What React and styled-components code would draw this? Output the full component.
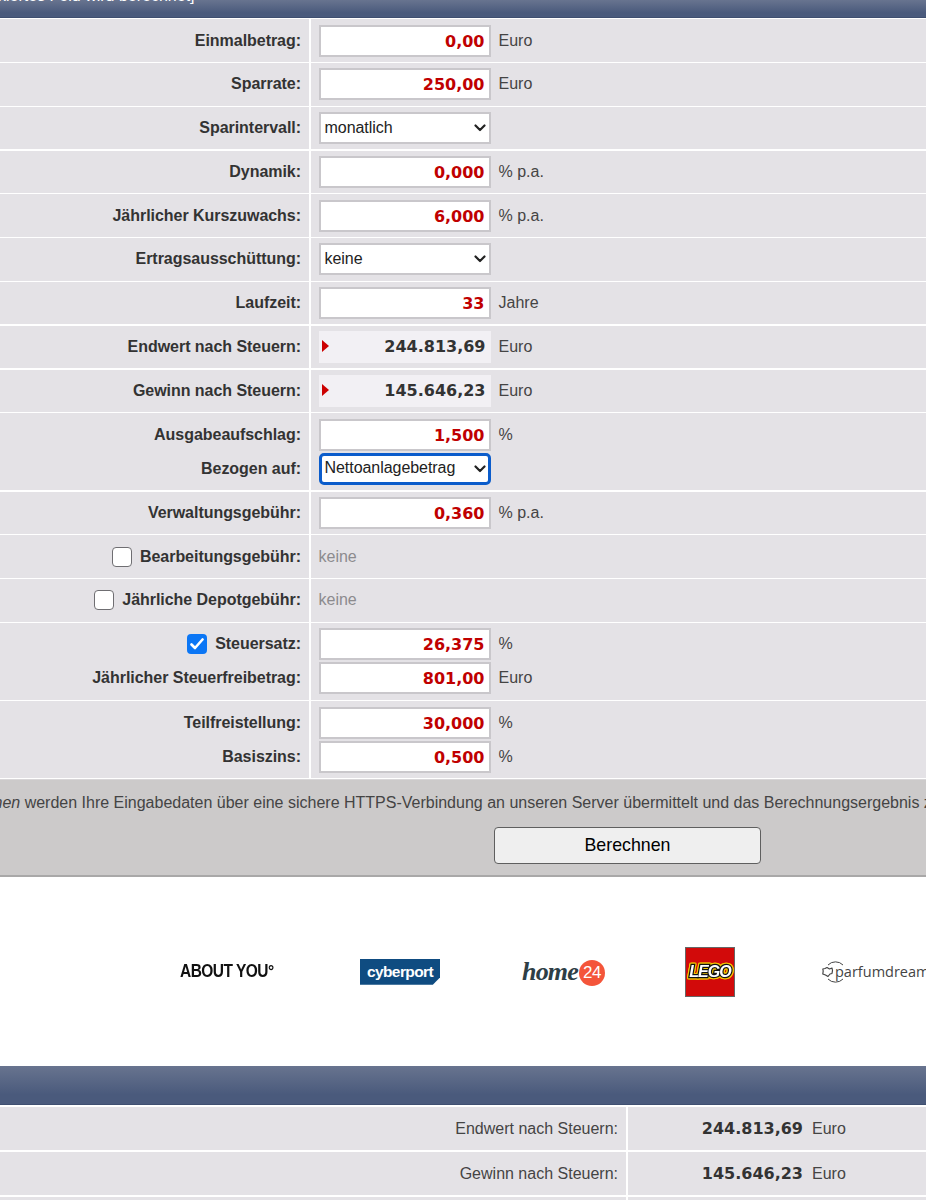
import styled, { createGlobalStyle } from 'styled-components'

const GlobalStyle = createGlobalStyle`
	html, body {
		margin: 0;
		padding: 0;
		background: white;
		font-family: "Liberation Sans", Arial, sans-serif;
		font-size: 16px;
		color: #333;
	}
`

const Page = styled.div`
	width: 926px;
	height: 1200px;
	overflow: hidden;
`

const Bar = styled.div`
	height: ${(props) => props.$height}px;
	overflow: hidden;
	white-space: nowrap;
	color: white;
	font-size: 16px;
	line-height: 18px;
	background: linear-gradient(#68748f, #4a5a7c 75%);
	border-bottom: 1px solid #3f4f70;
`

const BarText = styled.div`
	margin: -13px 0 0 -34px;
`

const Form = styled.div`
	display: flex;
	flex-direction: column;
	gap: 1.4px;
	padding: 1.4px 0;
`

const Row = styled.div`
	display: grid;
	grid-template-columns: 309px 1fr;
	column-gap: 1.5px;
	min-height: ${(props) => (props.$double ? '77px' : '0')};
`

const LabelCell = styled.div`
	display: flex;
	flex-direction: column;
	justify-content: center;
	gap: 2px;
	padding: 5.2px 8px 5.2px 0;
	background: #e4e2e6;
`

const ValueCell = styled(LabelCell)`
	padding: 5.2px 0 5.2px 8px;
`

const Line = styled.div`
	height: 32px;
	display: flex;
	align-items: center;
	justify-content: ${(props) => (props.$end ? 'flex-end' : 'flex-start')};
	gap: 8px;
`

const Label = styled.label`
	font-weight: bold;
	letter-spacing: -0.04px;
	color: #333;
`

const NumberInput = styled.input`
	box-sizing: border-box;
	width: 172px;
	height: 32px;
	padding: 1px 4px 0 0;
	border: 2px solid #c9c7cb;
	background: white;
	text-align: right;
	font-family: "DejaVu Sans", Verdana, sans-serif;
	font-size: 16px;
	font-weight: bold;
	color: #c00000;
	outline: none;
`

const Output = styled.div`
	box-sizing: border-box;
	width: 172px;
	height: 32px;
	padding: 0 5px 0 3px;
	display: flex;
	align-items: center;
	justify-content: space-between;
	background: #f2f0f4;
	font-family: "DejaVu Sans", Verdana, sans-serif;
	font-weight: bold;
	color: #333;
`

const Marker = styled.span`
	width: 0;
	height: 0;
	margin-top: -2px;
	border-top: 6.5px solid transparent;
	border-bottom: 6.5px solid transparent;
	border-left: 7px solid #cc0000;
`

const SelectWrap = styled.div`
	position: relative;
	width: 172px;
	height: 32px;
`

const Select = styled.select`
	box-sizing: border-box;
	width: 100%;
	height: 100%;
	padding: 0 0 2px ${(props) => (props.$focused ? 3 : 4)}px;
	appearance: none;
	border: ${(props) => (props.$focused ? '3px solid #0b5ccb' : '2px solid #c9c7cb')};
	border-radius: ${(props) => (props.$focused ? '5px' : '0')};
	background: white;
	font-family: "Liberation Sans", Arial, sans-serif;
	font-size: 16px;
	letter-spacing: -0.05px;
	color: #222;
	outline: none;
`

const Chevron = styled.svg`
	position: absolute;
	top: 12px;
	right: 5px;
	width: 12px;
	height: 8px;
	pointer-events: none;
`

const Unit = styled.span`
	color: #444;
`

const Muted = styled.span`
	color: #8c8b8e;
`

const Check = styled.span`
	box-sizing: border-box;
	width: 20px;
	height: 20px;
	display: flex;
	align-items: center;
	justify-content: center;
	border-radius: 4px;
	border: ${(props) => (props.$on ? 'none' : '1.5px solid #6f6e72')};
	background: ${(props) => (props.$on ? '#0b76f5' : 'white')};
`

const ActionBar = styled.div`
	margin-top: -0.4px;
	height: 95px;
	background: #cccaca;
	border-top: 1px solid #d8d6d8;
	border-bottom: 2px solid #a9a8a8;
	overflow: hidden;
`

const Notice = styled.div`
	margin: 13.7px 0 0 -163px;
	white-space: nowrap;
	line-height: 18px;
	color: #444;
`

const ButtonRow = styled.div`
	margin: 15px 0 0 494px;
`

const Button = styled.button`
	box-sizing: border-box;
	width: 267px;
	height: 37px;
	border: 1px solid #5f5f5f;
	border-radius: 4px;
	background: #efefef;
	font-family: "Liberation Sans", Arial, sans-serif;
	font-size: 17.8px;
	color: #000;
`

const LogoStrip = styled.div`
	height: 189px;
	display: flex;
	align-items: center;
	overflow: hidden;
`

const LogoSlot = styled.div`
	flex: none;
	width: ${(props) => props.$width}px;
	display: flex;
	align-items: center;
`

const AboutYou = styled.div`
	font-weight: bold;
	font-size: 18px;
	letter-spacing: -0.6px;
	color: #111;
	transform: scaleX(0.86);
	transform-origin: left center;
	white-space: nowrap;
`

const Cyberport = styled.div`
	width: 80px;
	height: 26px;
	display: flex;
	align-items: center;
	justify-content: center;
	background: #0f4c81;
	clip-path: polygon(0 0, 100% 0, 100% 72%, 91% 100%, 0 100%);
	color: white;
	font-weight: bold;
	font-size: 15.5px;
	letter-spacing: -0.6px;
`

const Home = styled.div`
	display: flex;
	align-items: center;
	gap: 1px;
	font-family: "Liberation Serif", serif;
	font-style: italic;
	font-weight: bold;
	font-size: 26px;
	letter-spacing: -0.8px;
	color: #2e3e46;
`

const HomeBadge = styled.span`
	width: 26px;
	height: 26px;
	margin-top: 3px;
	border-radius: 50%;
	display: flex;
	align-items: center;
	justify-content: center;
	background: #f4553a;
	font-family: "Liberation Sans", sans-serif;
	font-style: normal;
	font-weight: normal;
	color: white;
	font-size: 17px;
	letter-spacing: -0.5px;
`

const Lego = styled.div`
	box-sizing: border-box;
	width: 50px;
	height: 50px;
	display: flex;
	align-items: center;
	justify-content: center;
	background: #d20a0a;
	border: 1px solid #666;
`

const LegoWord = styled.span`
	font-weight: bold;
	font-style: italic;
	font-size: 16px;
	letter-spacing: -1px;
	line-height: 18px;
	color: white;
	-webkit-text-stroke: 2.5px #111;
	paint-order: stroke fill;
	filter: drop-shadow(1px 0 0 #f4c500) drop-shadow(-1px 0 0 #f4c500) drop-shadow(0 1px 0 #f4c500) drop-shadow(0 -1px 0 #f4c500);
`

const Parfum = styled.div`
	display: flex;
	align-items: center;
	font-family: "Open Sans", sans-serif;
	font-size: 14.5px;
	color: #444;
	white-space: nowrap;
`

const ParfumName = styled.span`
	margin-left: -11px;
`

const ResultTable = styled.div`
	display: flex;
	flex-direction: column;
	gap: 1.5px;
	padding-top: 1.5px;
`

const ResultRow = styled.div`
	display: grid;
	grid-template-columns: 626px 1fr;
	column-gap: 1.5px;
	height: 43.5px;
`

const ResultLabel = styled.div`
	display: flex;
	align-items: center;
	justify-content: flex-end;
	padding-right: 8px;
	background: #e4e2e6;
	color: #444;
`

const ResultValue = styled.div`
	display: flex;
	align-items: center;
	gap: 9px;
	background: #e4e2e6;
`

const ResultNumber = styled.span`
	width: 175.5px;
	text-align: right;
	font-family: "DejaVu Sans", Verdana, sans-serif;
	font-weight: bold;
	color: #333;
`

const ChevronIcon = () => (
	<Chevron viewBox="0 0 12 8">
		<path d="M1.5 1.5 L6 6 L10.5 1.5" fill="none" stroke="#222" strokeWidth="2.2" strokeLinecap="round" strokeLinejoin="round" />
	</Chevron>
)

const Num = ({ value, unit }) => (
	<Line>
		<NumberInput readOnly value={value} />
		<Unit>{unit}</Unit>
	</Line>
)

const Out = ({ value, unit }) => (
	<Line>
		<Output><Marker />{value}</Output>
		<Unit>{unit}</Unit>
	</Line>
)

const Sel = ({ value, focused }) => (
	<Line>
		<SelectWrap>
			<Select $focused={focused} defaultValue={value}>
				<option>{value}</option>
			</Select>
			<ChevronIcon />
		</SelectWrap>
	</Line>
)

const Lab = ({ children, check }) => (
	<Line $end>
		{check !== undefined && (
			<Check $on={check}>
				{check && (
					<svg width="14" height="12" viewBox="0 0 14 12">
						<path d="M1.5 6.5 L5 10 L12.5 1.5" fill="none" stroke="white" strokeWidth="2.6" strokeLinecap="round" strokeLinejoin="round" />
					</svg>
				)}
			</Check>
		)}
		<Label>{children}</Label>
	</Line>
)

const App = () => {
	return (
		<Page>
			<GlobalStyle />

			<Bar $height={17}>
				<BarText>[markiertes Feld wird berechnet]</BarText>
			</Bar>

			<Form>
				<Row>
					<LabelCell><Lab>Einmalbetrag:</Lab></LabelCell>
					<ValueCell><Num value="0,00" unit="Euro" /></ValueCell>
				</Row>
				<Row>
					<LabelCell><Lab>Sparrate:</Lab></LabelCell>
					<ValueCell><Num value="250,00" unit="Euro" /></ValueCell>
				</Row>
				<Row>
					<LabelCell><Lab>Sparintervall:</Lab></LabelCell>
					<ValueCell><Sel value="monatlich" /></ValueCell>
				</Row>
				<Row>
					<LabelCell><Lab>Dynamik:</Lab></LabelCell>
					<ValueCell><Num value="0,000" unit="% p.a." /></ValueCell>
				</Row>
				<Row>
					<LabelCell><Lab>Jährlicher Kurszuwachs:</Lab></LabelCell>
					<ValueCell><Num value="6,000" unit="% p.a." /></ValueCell>
				</Row>
				<Row>
					<LabelCell><Lab>Ertragsausschüttung:</Lab></LabelCell>
					<ValueCell><Sel value="keine" /></ValueCell>
				</Row>
				<Row>
					<LabelCell><Lab>Laufzeit:</Lab></LabelCell>
					<ValueCell><Num value="33" unit="Jahre" /></ValueCell>
				</Row>
				<Row>
					<LabelCell><Lab>Endwert nach Steuern:</Lab></LabelCell>
					<ValueCell><Out value="244.813,69" unit="Euro" /></ValueCell>
				</Row>
				<Row>
					<LabelCell><Lab>Gewinn nach Steuern:</Lab></LabelCell>
					<ValueCell><Out value="145.646,23" unit="Euro" /></ValueCell>
				</Row>
				<Row $double>
					<LabelCell>
						<Lab>Ausgabeaufschlag:</Lab>
						<Lab>Bezogen auf:</Lab>
					</LabelCell>
					<ValueCell>
						<Num value="1,500" unit="%" />
						<Sel value="Nettoanlagebetrag" focused />
					</ValueCell>
				</Row>
				<Row>
					<LabelCell><Lab>Verwaltungsgebühr:</Lab></LabelCell>
					<ValueCell><Num value="0,360" unit="% p.a." /></ValueCell>
				</Row>
				<Row>
					<LabelCell><Lab check={false}>Bearbeitungsgebühr:</Lab></LabelCell>
					<ValueCell><Line><Muted>keine</Muted></Line></ValueCell>
				</Row>
				<Row>
					<LabelCell><Lab check={false}>Jährliche Depotgebühr:</Lab></LabelCell>
					<ValueCell><Line><Muted>keine</Muted></Line></ValueCell>
				</Row>
				<Row $double>
					<LabelCell>
						<Lab check={true}>Steuersatz:</Lab>
						<Lab>Jährlicher Steuerfreibetrag:</Lab>
					</LabelCell>
					<ValueCell>
						<Num value="26,375" unit="%" />
						<Num value="801,00" unit="Euro" />
					</ValueCell>
				</Row>
				<Row $double>
					<LabelCell>
						<Lab>Teilfreistellung:</Lab>
						<Lab>Basiszins:</Lab>
					</LabelCell>
					<ValueCell>
						<Num value="30,000" unit="%" />
						<Num value="0,500" unit="%" />
					</ValueCell>
				</Row>
			</Form>

			<ActionBar>
				<Notice>
					Beim Klick auf <em>Berechnen</em> werden Ihre Eingabedaten über eine sichere HTTPS-Verbindung an unseren Server übermittelt und das Berechnungsergebnis zurückgesendet.
				</Notice>
				<ButtonRow>
					<Button>Berechnen</Button>
				</ButtonRow>
			</ActionBar>

			<LogoStrip>
				<LogoSlot $width={180} />
				<LogoSlot $width={180}><AboutYou>ABOUT YOU°</AboutYou></LogoSlot>
				<LogoSlot $width={162}><Cyberport>cyberport</Cyberport></LogoSlot>
				<LogoSlot $width={163}><Home>home<HomeBadge>24</HomeBadge></Home></LogoSlot>
				<LogoSlot $width={137}><Lego><LegoWord>LEGO</LegoWord></Lego></LogoSlot>
				<LogoSlot $width={200}>
					<Parfum>
						<svg width="24" height="24" viewBox="0 0 24 24">
							<path d="M6 5 A10.5 10.5 0 0 1 21 5 M6 19 A10.5 10.5 0 0 0 21 19" fill="none" stroke="#444" strokeWidth="1" />
							<path d="M5 7.5 L7.5 9 L10 8 L10.5 10.5 L10 13.5 L8 14 L6 16.5 L3.5 15 L0.8 14 L1.2 11 L0.8 9 L3 8.5 Z" fill="none" stroke="#444" strokeWidth="1.2" strokeLinejoin="round" />
						</svg>
						<ParfumName>parfumdreams</ParfumName>
					</Parfum>
				</LogoSlot>
			</LogoStrip>

			<Bar $height={38} />

			<ResultTable>
				<ResultRow>
					<ResultLabel>Endwert nach Steuern:</ResultLabel>
					<ResultValue>
						<ResultNumber>244.813,69</ResultNumber>
						<Unit>Euro</Unit>
					</ResultValue>
				</ResultRow>
				<ResultRow>
					<ResultLabel>Gewinn nach Steuern:</ResultLabel>
					<ResultValue>
						<ResultNumber>145.646,23</ResultNumber>
						<Unit>Euro</Unit>
					</ResultValue>
				</ResultRow>
				<ResultRow>
					<ResultLabel />
					<ResultValue />
				</ResultRow>
			</ResultTable>
		</Page>
	)
}

export default App
